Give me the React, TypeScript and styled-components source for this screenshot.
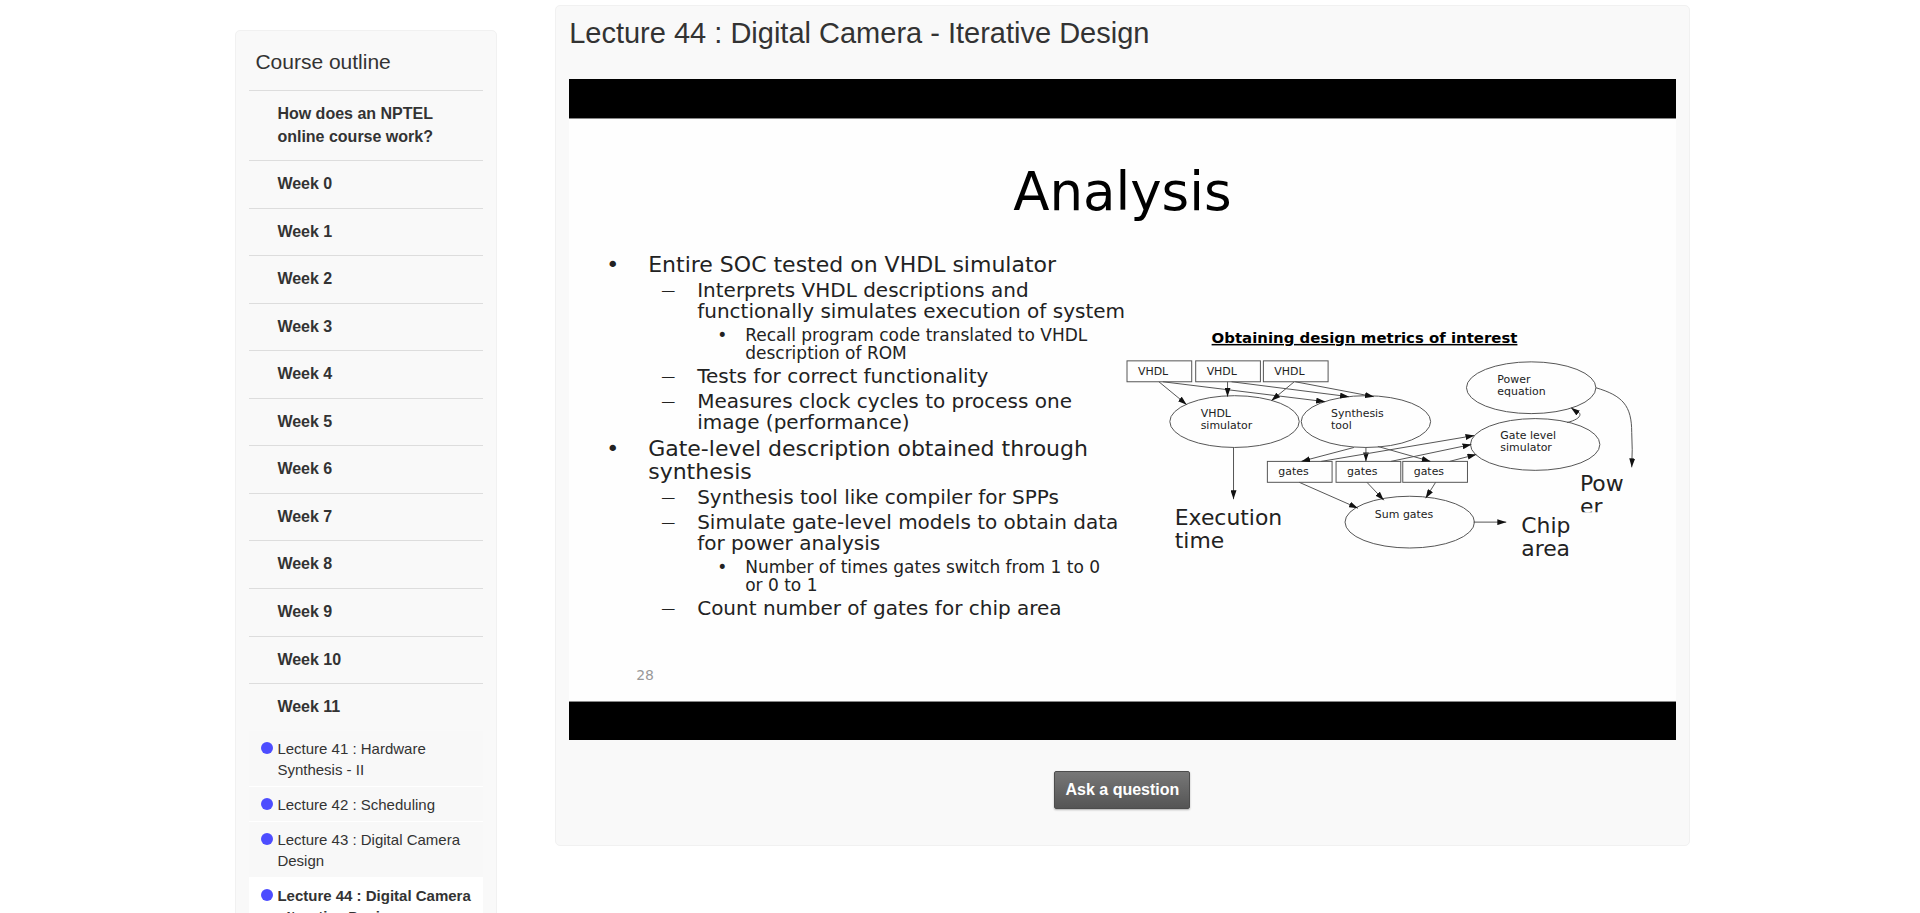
import React from "react";
import styled, { createGlobalStyle, css } from "styled-components";

const GlobalStyle = createGlobalStyle`
  *, *::before, *::after { box-sizing: border-box; }
  body {
    margin: 0;
    background: #fff;
    color: #333;
    font-family: "Liberation Sans", Arial, Helvetica, sans-serif;
  }
`;

const Page = styled.div`
  height: 100vh;
  overflow-y: auto;
  scrollbar-width: none;
  display: grid;
  grid-template-columns: 262fr 1136fr;
  column-gap: 4%;
  align-items: start;
  padding: 5px 12% 0;
  padding-left: calc(12% + 5px);
`;

const panel = css`
  background: #f9f9f9;
  border: 1px solid #f1f1f1;
  border-radius: 5px;
`;

const Sidebar = styled.nav`
  ${panel}
  margin-top: 25px;
  padding: 13px 13px 40px;
`;

const OutlineTitle = styled.h2`
  margin: 0;
  padding: 4px 6px 14px;
  font-size: 21px;
  line-height: 28px;
  font-weight: 400;
`;

const UnitList = styled.ul`
  list-style: none;
  margin: 0;
  padding: 0;
`;

const Unit = styled.li`
  border-top: 1px solid #ddd;
`;

const UnitLink = styled.a`
  display: block;
  padding: 12px 24px 12px 28px;
  color: #333;
  font-size: 16px;
  line-height: 1.41;
  font-weight: 700;
  text-decoration: none;
`;

const LessonList = styled.ul`
  list-style: none;
  margin: 0;
  padding: 0;
`;

const Lesson = styled.li<{ $current?: boolean }>`
  border-bottom: 1px solid #fff;
  background: ${(p) => (p.$current ? "#fff" : "#f8f8f8")};
  font-weight: ${(p) => (p.$current ? 700 : 400)};
`;

const LessonLink = styled.a`
  display: grid;
  grid-template-columns: 12px 1fr;
  column-gap: 4px;
  padding: 7px 8px 6px 12px;
  color: #333;
  font-size: 15px;
  line-height: 21px;
  text-decoration: none;
`;

const Dot = styled.span`
  width: 12px;
  height: 12px;
  margin-top: 4px;
  border-radius: 50%;
  background: #4d4dff;
`;

const Main = styled.main`
  ${panel}
  padding: 8px 13px 36px;
`;

const LectureTitle = styled.h1`
  margin: 0 0 27px;
  font-size: 29px;
  line-height: 38px;
  font-weight: 400;
`;

const Video = styled.section`
  padding: 39px 0 38px;
  background: #000;
`;

const Slide = styled.div`
  display: flex;
  flex-direction: column;
  min-height: 584px;
  padding: 43px 0 17px;
  background: #fefefe;
  border: solid #888;
  border-width: 1px 0;
  color: #222;
  font-family: "DejaVu Sans", Verdana, sans-serif;
`;

const SlideTitle = styled.h2`
  margin: 0 0 31px;
  color: #000;
  font-size: 53px;
  line-height: 60px;
  font-weight: 400;
  text-align: center;
`;

const SlideColumns = styled.div`
  display: grid;
  grid-template-columns: 555fr 553fr;
  flex: 1;
`;

const levels = {
  1: { size: 22, line: 23, gutter: 42, indent: 37, mark: "•", markSize: 22 },
  2: { size: 20, line: 21, gutter: 36, indent: 13, mark: "—", markSize: 14 },
  3: { size: 17, line: 18, gutter: 28, indent: 20, mark: "•", markSize: 17 },
};
type Level = 1 | 2 | 3;

const Points = styled.ul<{ $level: Level }>`
  list-style: none;
  display: flex;
  flex-direction: column;
  gap: 4px;
  margin: ${(p) => (p.$level === 1 ? 0 : 4)}px 0 0;
  padding: 0 0 0 ${(p) => levels[p.$level].indent}px;
  font-size: ${(p) => levels[p.$level].size}px;
  line-height: ${(p) => levels[p.$level].line}px;
  white-space: nowrap;
`;

const Point = styled.li<{ $level: Level }>`
  display: grid;
  grid-template-columns: ${(p) => levels[p.$level].gutter}px 1fr;
  &::before {
    content: "${(p) => levels[p.$level].mark}";
    font-size: ${(p) => levels[p.$level].markSize}px;
  }
`;

const Diagram = styled.svg`
  display: block;
  width: 100%;
  margin-top: 75px;
  overflow: visible;
  fill: none;
  stroke: #555;
  stroke-width: 1;
  text {
    fill: #222;
    stroke: none;
    font-size: 11px;
  }
  text.result {
    font-size: 22px;
  }
  text.heading {
    fill: #000;
    font-size: 15px;
    font-weight: 700;
    text-decoration: underline;
  }
`;

const PageNumber = styled.div`
  padding-left: 67px;
  color: #999;
  font-size: 14px;
  line-height: 18px;
`;

const Actions = styled.div`
  display: flex;
  justify-content: center;
  padding-top: 31px;
`;

const AskButton = styled.button`
  height: 38px;
  padding: 0 10px;
  border: 1px solid #4d4d4d;
  border-radius: 2px;
  background: linear-gradient(#777, #555);
  box-shadow: 0 1px 2px rgba(0, 0, 0, 0.3);
  color: #fff;
  font-family: inherit;
  font-size: 16px;
  font-weight: 700;
  cursor: pointer;
`;

const units = [
  "How does an NPTEL online course work?",
  ...Array.from({ length: 12 }, (_, i) => `Week ${i}`),
];

const lessons = [
  "Lecture 41 : Hardware Synthesis - II",
  "Lecture 42 : Scheduling",
  "Lecture 43 : Digital Camera Design",
  "Lecture 44 : Digital Camera - Iterative Design",
];

interface Item {
  lines: string[];
  children?: Item[];
}

const points: Item[] = [
  {
    lines: ["Entire SOC tested on VHDL simulator"],
    children: [
      {
        lines: ["Interprets VHDL descriptions and", "functionally simulates execution of system"],
        children: [{ lines: ["Recall program code translated to VHDL", "description of ROM"] }],
      },
      { lines: ["Tests for correct functionality"] },
      { lines: ["Measures clock cycles to process one", "image (performance)"] },
    ],
  },
  {
    lines: ["Gate-level description obtained through", "synthesis"],
    children: [
      { lines: ["Synthesis tool like compiler for SPPs"] },
      {
        lines: ["Simulate gate-level models to obtain data", "for power analysis"],
        children: [{ lines: ["Number of times gates switch from 1 to 0", "or 0 to 1"] }],
      },
      { lines: ["Count number of gates for chip area"] },
    ],
  },
];

function PointList({ items, level }: { items: Item[]; level: Level }) {
  return (
    <Points $level={level}>
      {items.map((item) => (
        <Point key={item.lines[0]} $level={level}>
          <div>
            {item.lines.map((line) => (
              <div key={line}>{line}</div>
            ))}
            {item.children && <PointList items={item.children} level={(level + 1) as Level} />}
          </div>
        </Point>
      ))}
    </Points>
  );
}

const boxes = [
  { x: 2, y: 33, label: "VHDL" },
  { x: 71, y: 33, label: "VHDL" },
  { x: 139, y: 33, label: "VHDL" },
  { x: 143, y: 134, label: "gates" },
  { x: 212, y: 134, label: "gates" },
  { x: 279, y: 134, label: "gates" },
];

const nodes = [
  { cx: 110, cy: 94, tx: 76, ty: 89, lines: ["VHDL", "simulator"] },
  { cx: 242, cy: 94, tx: 207, ty: 89, lines: ["Synthesis", "tool"] },
  { cx: 286, cy: 195, tx: 251, ty: 191, lines: ["Sum gates"] },
  { cx: 408, cy: 60, tx: 374, ty: 55, lines: ["Power", "equation"] },
  { cx: 412, cy: 117, tx: 377, ty: 112, lines: ["Gate level", "simulator"] },
];

const arrows = [
  "M34 54 62 77",
  "M38 54 201 74",
  "M103 54V69",
  "M107 54 225 69",
  "M170 54 147 73",
  "M171 54 250 69",
  "M109 120V172",
  "M230 120 177 134",
  "M242 120V134",
  "M254 119 307 134",
  "M197 134 351 108",
  "M267 134 348 117",
  "M326 134 353 127",
  "M175 155 234 181",
  "M243 155 260 173",
  "M312 155 302 171",
  "M350 195H383",
  "M444 95C452 93 457 90 457 87C457 84 452 83 448 80",
  "M473 60C500 68 509 78 509 105Q510 122 509 140",
];

function MetricsDiagram() {
  return (
    <Diagram viewBox="0 0 553 240" role="img" aria-label="Obtaining design metrics of interest">
      <defs>
        <marker id="head" markerWidth="9" markerHeight="6" refX="9" refY="3" orient="auto" markerUnits="userSpaceOnUse">
          <path d="M0 0 9 3 0 6z" fill="#111" stroke="none" />
        </marker>
        <clipPath id="cut">
          <rect x="450" y="140" width="60" height="45" />
        </clipPath>
      </defs>
      <text className="heading" x="87" y="15">Obtaining design metrics of interest</text>
      {boxes.map((b) => (
        <g key={b.x}>
          <rect x={b.x} y={b.y} width="65" height="21" />
          <text x={b.x + 11} y={b.y + 14}>{b.label}</text>
        </g>
      ))}
      {nodes.map((n) => (
        <g key={n.cx}>
          <ellipse cx={n.cx} cy={n.cy} rx="65" ry="26" />
          {n.lines.map((line, i) => (
            <text key={line} x={n.tx} y={n.ty + i * 12}>{line}</text>
          ))}
        </g>
      ))}
      {arrows.map((d) => (
        <path key={d} d={d} markerEnd="url(#head)" />
      ))}
      <text className="result" x="50" y="198">Execution</text>
      <text className="result" x="50" y="221">time</text>
      <g clipPath="url(#cut)">
        <text className="result" x="457" y="164">Pow</text>
        <text className="result" x="457" y="187">er</text>
      </g>
      <text className="result" x="398" y="206">Chip</text>
      <text className="result" x="398" y="229">area</text>
    </Diagram>
  );
}

export default function App() {
  return (
    <>
      <GlobalStyle />
      <Page>
        <Sidebar aria-label="Course outline">
          <OutlineTitle>Course outline</OutlineTitle>
          <UnitList>
            {units.map((unit) => (
              <Unit key={unit}>
                <UnitLink href="#">{unit}</UnitLink>
                {unit === "Week 11" && (
                  <LessonList>
                    {lessons.map((lesson, i) => (
                      <Lesson key={lesson} $current={i === 3}>
                        <LessonLink href="#">
                          <Dot />
                          <span>{lesson}</span>
                        </LessonLink>
                      </Lesson>
                    ))}
                  </LessonList>
                )}
              </Unit>
            ))}
          </UnitList>
        </Sidebar>
        <Main>
          <LectureTitle>Lecture 44 : Digital Camera - Iterative Design</LectureTitle>
          <Video aria-label="Lecture video">
            <Slide>
              <SlideTitle>Analysis</SlideTitle>
              <SlideColumns>
                <PointList items={points} level={1} />
                <MetricsDiagram />
              </SlideColumns>
              <PageNumber>28</PageNumber>
            </Slide>
          </Video>
          <Actions>
            <AskButton type="button">Ask a question</AskButton>
          </Actions>
        </Main>
      </Page>
    </>
  );
}
